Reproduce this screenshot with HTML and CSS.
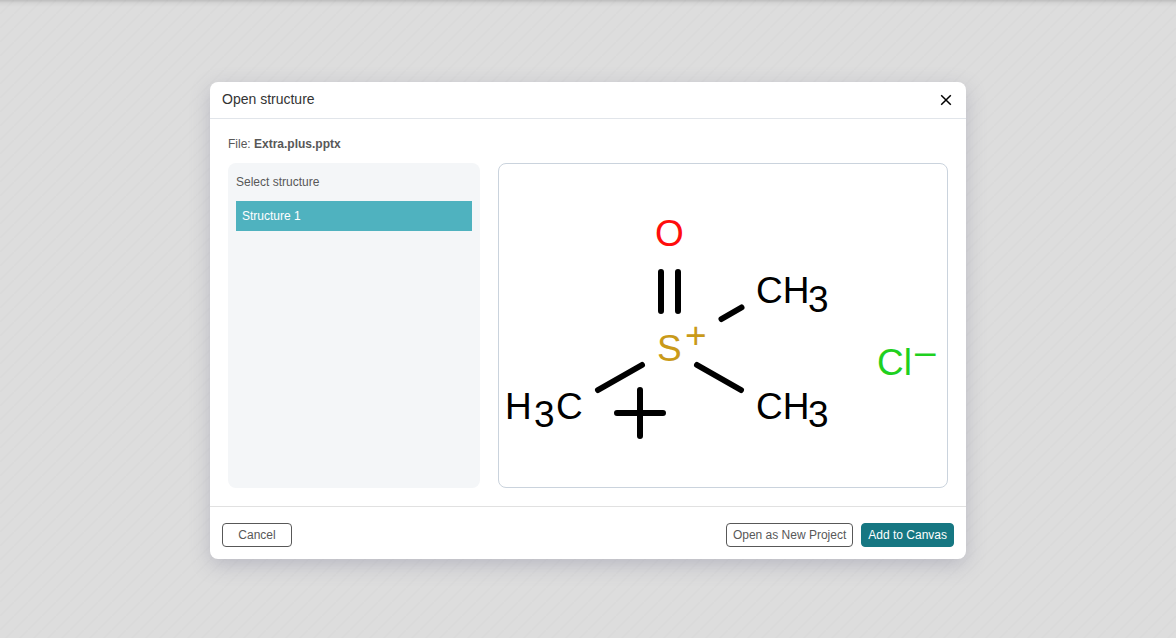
FILE: index.html
```html
<!DOCTYPE html>
<html lang="en">
<head>
<meta charset="utf-8">
<meta name="viewport" content="width=device-width, initial-scale=1">
<title>Open structure</title>
<link rel="stylesheet" href="styles.css">
</head>
<body>
<main class="backdrop">
  <section class="dialog" role="dialog" aria-modal="true" aria-labelledby="dialog-title">
    <header class="dialog-header">
      <h1 class="dialog-title" id="dialog-title">Open structure</h1>
      <button class="close-button" type="button" aria-label="Close">
        <svg class="close-icon" viewBox="0 0 16 16" aria-hidden="true"><path d="M3.2 3.2 12.8 12.8M12.8 3.2 3.2 12.8"/></svg>
      </button>
    </header>
    <div class="dialog-body">
      <p class="file-name">File: <strong>Extra.plus.pptx</strong></p>
      <div class="panels">
        <div class="structure-list">
          <h2 class="list-title">Select structure</h2>
          <ul class="structures">
            <li><button class="structure" type="button" aria-pressed="true">Structure 1</button></li>
          </ul>
        </div>
        <div class="preview">
          <svg class="molecule" viewBox="0 0 448 323" role="img" aria-label="Structure preview">
            <g class="bonds">
              <path d="M162 108V147M179 108V147"/>
              <path d="M222.5 155 242.5 143.5"/>
              <path d="M198 201 242 226"/>
              <path d="M143 201 99 226"/>
              <path d="M118 249H164M141 226V272"/>
            </g>
            <g class="atoms">
              <text class="oxygen" x="156" y="82">O</text>
              <text class="sulfur" x="158" y="197">S</text>
              <text class="sulfur" x="186" y="184">+</text>
              <text x="257" y="139">CH</text><text x="309" y="148">3</text>
              <text x="257" y="255">CH</text><text x="309" y="263">3</text>
              <text x="6" y="255">H</text><text x="35" y="263">3</text><text x="57" y="255">C</text>
              <text class="chlorine" x="378" y="211">Cl</text>
              <text class="chlorine" x="416" y="200">–</text>
            </g>
          </svg>
        </div>
      </div>
    </div>
    <footer class="dialog-footer">
      <button class="button button-cancel" type="button">Cancel</button>
      <div class="actions">
        <button class="button" type="button">Open as New Project</button>
        <button class="button button-primary" type="button">Add to Canvas</button>
      </div>
    </footer>
  </section>
</main>
</body>
</html>
```

FILE: styles.css
```css
* {
  box-sizing: border-box;
}

body {
  margin: 0;
  font-family: "Liberation Sans", Arial, sans-serif;
  font-size: 12px;
  line-height: 16px;
  color: #585858;
}

.backdrop {
  display: flex;
  align-items: center;
  justify-content: center;
  min-height: 100vh;
  padding: 18px 16px 16px;
  background:
    linear-gradient(rgba(0, 0, 0, 0.14), rgba(0, 0, 0, 0.04) 3px, transparent 7px),
    linear-gradient(135deg, #dddddd 42%, #dadada 50%, #dddddd 58%) 0 0 / 14px 14px;
}

.dialog {
  width: 100%;
  max-width: 756px;
  border-radius: 8px;
  background: #fff;
  box-shadow: 0 6px 20px rgba(103, 104, 132, 0.3);
}

.dialog-header {
  display: flex;
  align-items: center;
  justify-content: space-between;
  padding: 8px 12px;
  border-bottom: 1px solid #e1e5ea;
}

.dialog-title {
  margin: 0;
  padding-bottom: 2px;
  font-size: 14px;
  font-weight: 400;
  line-height: 18px;
  color: #333;
}

.close-button {
  display: flex;
  padding: 0;
  border: 0;
  background: none;
  cursor: pointer;
}

.close-icon {
  width: 16px;
  height: 16px;
  fill: none;
  stroke: #000;
  stroke-width: 1.5;
}

.dialog-body {
  padding: 17px 18px 18px;
}

.file-name {
  margin: 0 0 11px;
}

.panels {
  display: grid;
  grid-template-columns: 14fr 25fr;
  gap: 18px;
}

.structure-list {
  padding: 11px 8px;
  border-radius: 8px;
  background: #f4f6f8;
}

.list-title {
  margin: 0 0 11px;
  font-size: 12px;
  font-weight: 400;
  line-height: 16px;
}

.structures {
  margin: 0;
  padding: 0;
  list-style: none;
}

.structure {
  width: 100%;
  padding: 7px 6px;
  border: 0;
  background: #4fb2bf;
  font: inherit;
  text-align: left;
  color: #fff;
  cursor: pointer;
}

.preview {
  border: 1px solid #cad3dd;
  border-radius: 8px;
}

.molecule {
  display: block;
  width: 100%;
}

.bonds {
  fill: none;
  stroke: #000;
  stroke-width: 6;
  stroke-linecap: round;
}

.atoms {
  font-size: 37px;
  fill: #000;
}

.oxygen {
  fill: #ff0d0d;
}

.sulfur {
  fill: #c99a19;
}

.chlorine {
  fill: #1fd01f;
}

.dialog-footer {
  display: flex;
  justify-content: space-between;
  padding: 16px 12px 12px;
  border-top: 1px solid #e1e1e1;
}

.actions {
  display: flex;
  gap: 8px;
}

.button {
  padding: 3px 6px;
  border: 1px solid #585858;
  border-radius: 4px;
  background: #fff;
  font: inherit;
  color: #585858;
  cursor: pointer;
}

.button-cancel {
  min-width: 70px;
}

.button-primary {
  border-color: #167782;
  background: #167782;
  color: #fff;
}
```
